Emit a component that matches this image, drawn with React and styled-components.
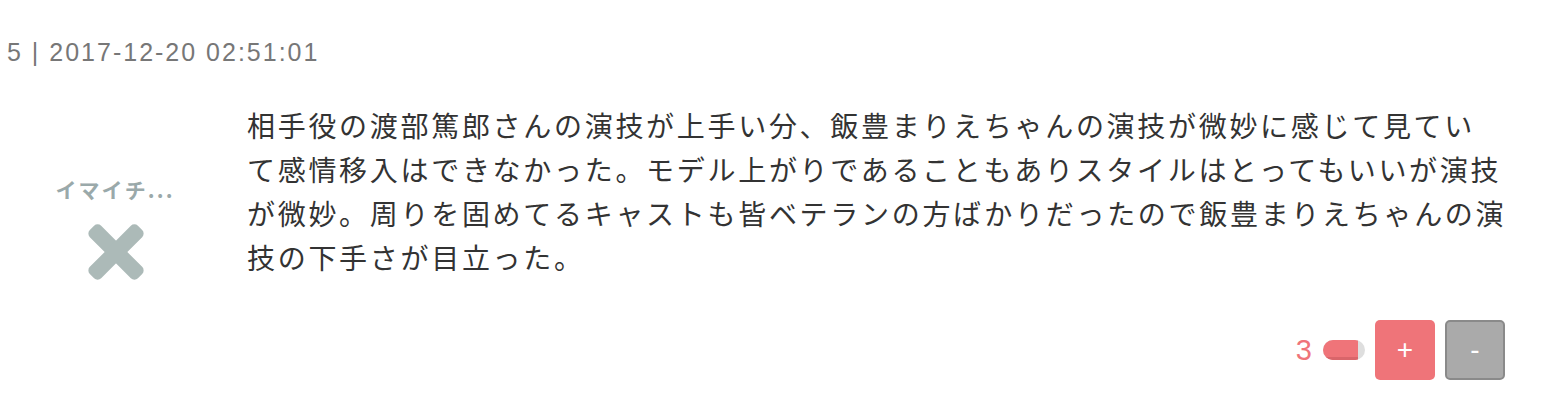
import React from "react";
import styled, { createGlobalStyle } from "styled-components";

const GlobalStyle = createGlobalStyle`
  body {
    margin: 0;
    background: #fff;
    font-family: "Liberation Sans", "Noto Sans CJK JP", sans-serif;
    letter-spacing: 0.1em;
  }
`;

export default function App() {
  return (
    <Page>
      <GlobalStyle />
      <Meta>5 | 2017-12-20 02:51:01</Meta>
      <CommentRow>
        <Rating>
          <RatingLabel>イマイチ...</RatingLabel>
          <CrossIcon viewBox="0 0 58 58" aria-hidden="true">
            <rect x="-5" y="21" width="68" height="16" rx="5" transform="rotate(45 29 29)" />
            <rect x="-5" y="21" width="68" height="16" rx="5" transform="rotate(-45 29 29)" />
          </CrossIcon>
        </Rating>
        <Body>
          相手役の渡部篤郎さんの演技が上手い分、飯豊まりえちゃんの演技が微妙に感じて見てい
          <br />
          て感情移入はできなかった。モデル上がりであることもありスタイルはとってもいいが演技が微妙。周りを固めてるキャストも皆ベテランの方ばかりだったので飯豊まりえちゃんの演技の下手さが目立った。
        </Body>
      </CommentRow>
      <VoteRow>
        <VoteCount>3</VoteCount>
        <VoteBar>
          <VoteFill style={{ width: `${(3 / 3.6) * 100}%` }} />
        </VoteBar>
        <VoteButton $variant="plus">+</VoteButton>
        <VoteButton $variant="minus">-</VoteButton>
      </VoteRow>
    </Page>
  );
}

const Page = styled.div`
  padding-top: 40px;
  width: 1562px;
  box-sizing: border-box;
`;

const Meta = styled.div`
  padding-left: 7px;
  font-size: 25px;
  line-height: 24px;
  letter-spacing: 2px;
  color: #777;
`;

const CommentRow = styled.div`
  display: flex;
  align-items: flex-start;
  margin-top: 39px;
`;

const Rating = styled.div`
  width: 230px;
  flex-shrink: 0;
  padding-top: 74px;
  display: flex;
  flex-direction: column;
  align-items: center;
  margin-right: 17px;
`;

const RatingLabel = styled.div`
  font-family: "Noto Sans CJK JP", sans-serif;
  font-size: 21px;
  line-height: 24px;
  font-weight: 700;
  letter-spacing: 0.1em;
  color: #9aa9aa;
`;

const CrossIcon = styled.svg`
  width: 58px;
  height: 58px;
  margin-top: 22px;
  margin-left: 2px;
  fill: #acbab8;
`;

const Body = styled.p`
  margin: 0;
  width: 1262px;
  font-family: "Noto Sans CJK JP", sans-serif;
  font-size: 28px;
  line-height: 44px;
  letter-spacing: 2.7px;
  color: #333;
`;

const VoteRow = styled.div`
  display: flex;
  justify-content: flex-end;
  align-items: center;
  margin-top: 39px;
  padding-right: 57px;
`;

const VoteCount = styled.span`
  font-size: 29px;
  line-height: 1;
  letter-spacing: 0;
  color: #ef7479;
  margin-right: 11px;
`;

const VoteBar = styled.div`
  width: 42px;
  height: 20px;
  border-radius: 10px;
  background: #dedede;
  overflow: hidden;
  margin-right: 10px;
`;

const VoteFill = styled.div`
  height: 100%;
  background: #ef7479;
  box-shadow: inset 0 -3px 0 #d9656a;
`;

const VoteButton = styled.button`
  width: 60px;
  height: 60px;
  box-sizing: border-box;
  border-radius: 5px;
  font-family: "Liberation Sans", sans-serif;
  font-size: 28px;
  letter-spacing: 0;
  color: #fff;
  padding: 0;
  display: flex;
  align-items: center;
  justify-content: center;
  background: ${(p) => (p.$variant === "plus" ? "#ef7479" : "#aaaaaa")};
  border: ${(p) => (p.$variant === "plus" ? "none" : "2px solid #8a8a8a")};
  & + & {
    margin-left: 10px;
  }
`;
